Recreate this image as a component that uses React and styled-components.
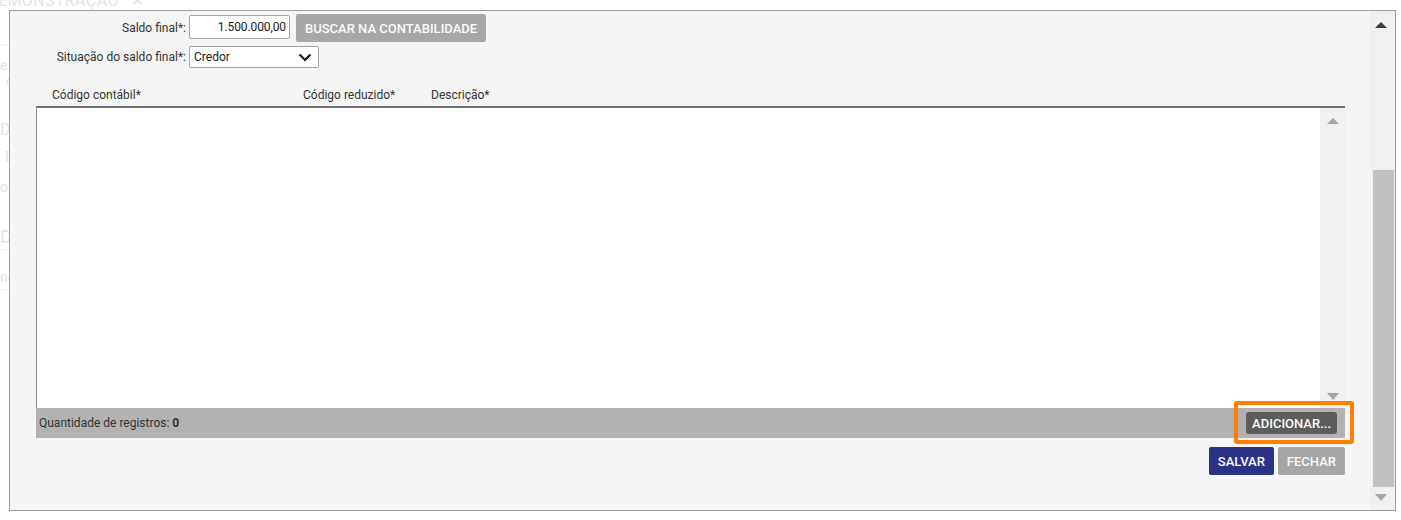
import React from 'react';
import styled, { createGlobalStyle } from 'styled-components';

const GlobalStyle = createGlobalStyle`
  html, body {
    margin: 0;
    padding: 0;
    background: #ffffff;
    font-family: Roboto, 'Liberation Sans', Arial, sans-serif;
    font-size: 12px;
    color: #333333;
  }
`;

const Page = styled.div`
  position: relative;
  width: 1401px;
  height: 520px;
  overflow: hidden;
`;

const Backdrop = styled.div`
  display: flex;
  flex-direction: column;
  color: #e4e4e4;
  width: 40px;
`;

const GhostTitle = styled.div`
  display: flex;
  align-items: center;
  gap: 12px;
  margin: -10px 0 0 -13px;
  height: 20px;
  font-size: 16px;
  letter-spacing: 0.4px;
  padding-bottom: 34px;
  border-bottom: 1px solid #f0f0f0;
  width: 40px;
  white-space: nowrap;
`;

const GhostLine = styled.div`
  margin-top: ${(p) => p.$top}px;
  padding-left: ${(p) => p.$left || 0}px;
  height: 16px;
  line-height: 16px;
  font-size: ${(p) => p.$size || 14}px;
  white-space: nowrap;
  ${(p) => p.$rule && 'padding-bottom: 4px; border-bottom: 1px solid #f0f0f0;'}
`;

const Dialog = styled.div`
  position: absolute;
  left: 9px;
  top: 10px;
  width: 1387px;
  height: 501px;
  box-sizing: border-box;
  border: 1px solid #9d9d9d;
  background: #f5f5f5;
  display: flex;
`;

const DialogBody = styled.div`
  flex: 1;
  padding: 3px 25px 0 26px;
  display: flex;
  flex-direction: column;
`;

const FormRow = styled.div`
  display: flex;
  align-items: center;
  height: ${(p) => p.$h}px;
  margin-bottom: 4px;
`;

const Label = styled.label`
  width: 150px;
  text-align: right;
  padding-right: 3px;
  color: #333;
`;

const TextInput = styled.div`
  box-sizing: border-box;
  width: 101px;
  height: 24px;
  margin-top: -3px;
  border: 1px solid #a3a3a3;
  border-radius: 2px;
  background: #fff;
  text-align: right;
  line-height: 22px;
  padding-right: 3px;
  letter-spacing: -0.1px;
  white-space: nowrap;
  color: #222;
`;

const Button = styled.button`
  box-sizing: border-box;
  height: ${(p) => p.$h || 28}px;
  padding: 0 ${(p) => p.$px || 10}px;
  border: none;
  border-radius: ${(p) => p.$radius || 2}px;
  background: ${(p) => p.$bg};
  color: #fbfbfb;
  font-family: Roboto, 'Liberation Sans', Arial, sans-serif;
  font-size: 13px;
  font-weight: 500;
  cursor: pointer;
  white-space: nowrap;
  margin-left: ${(p) => p.$ml || 0}px;
`;

const Select = styled.div`
  box-sizing: border-box;
  width: 130px;
  height: 22px;
  border: 1px solid #a3a3a3;
  border-radius: 2px;
  background: #fff;
  display: flex;
  align-items: center;
  justify-content: space-between;
  padding: 0 6px 0 4px;
  color: #222;
`;

const HeaderRow = styled.div`
  display: grid;
  grid-template-columns: 251px 128px 1fr;
  padding-left: 16px;
  margin-top: 15px;
  height: 19px;
  line-height: 16px;
  color: #333;
`;

const Table = styled.div`
  border-top: 2px solid #6f6f6f;
  border-left: 1px solid #8d8d8d;
  height: 300px;
  display: flex;
  background: #fff;
`;

const TableBody = styled.div`
  flex: 1;
`;

const ScrollTrack = styled.div`
  width: ${(p) => p.$w}px;
  background: #f0f0f0;
  display: flex;
  flex-direction: column;
  align-items: center;
  padding: ${(p) => p.$pad};
  box-sizing: border-box;
`;

const Arrow = styled.div`
  width: 0;
  height: 0;
  border-left: 6px solid transparent;
  border-right: 6px solid transparent;
  ${(p) =>
    p.$dir === 'up'
      ? `border-bottom: 6px solid ${p.$color};`
      : `border-top: 7px solid ${p.$color};`}
  margin-top: ${(p) => p.$mt || 0}px;
  margin-left: ${(p) => p.$ml || 0}px;
`;

const Spacer = styled.div`
  flex: 1;
`;

const Thumb = styled.div`
  width: 21px;
  height: 317px;
  background: #c1c1c1;
  margin: 0 0 0 2px;
`;

const FooterBar = styled.div`
  height: 30px;
  background: #b2b2b2;
  display: flex;
  align-items: center;
  justify-content: space-between;
  padding: 0 8px 0 3px;
  color: #333;
`;

const Highlight = styled.span`
  position: relative;
  display: inline-flex;
  &::after {
    content: '';
    position: absolute;
    left: -12px;
    top: -11px;
    right: -17px;
    bottom: -10px;
    border: 4px solid #ff8000;
    border-radius: 3px;
    pointer-events: none;
  }
`;

const Actions = styled.div`
  display: flex;
  justify-content: flex-end;
  gap: 4px;
  margin-top: 9px;
`;

export default function App() {
  return (
    <Page>
      <GlobalStyle />
      <Backdrop>
        <GhostTitle>
          <span>DEMONSTRAÇÃO</span>
          <span>✕</span>
        </GhostTitle>
        <GhostLine $top={12}>e s</GhostLine>
        <GhostLine $top={0} $left={6}>c</GhostLine>
        <GhostLine $top={33} $size={16}>De</GhostLine>
        <GhostLine $top={11} $left={5}>E</GhostLine>
        <GhostLine $top={14}>on</GhostLine>
        <GhostLine $top={34} $size={18} $rule>DE</GhostLine>
        <GhostLine $top={19} $rule>no</GhostLine>
      </Backdrop>

      <Dialog>
        <DialogBody>
          <FormRow $h={28}>
            <Label>Saldo final*:</Label>
            <TextInput>1.500.000,00</TextInput>
            <Button $bg="#a7a7a7" $ml={6} $px={9}>BUSCAR NA CONTABILIDADE</Button>
          </FormRow>
          <FormRow $h={22}>
            <Label>Situação do saldo final*:</Label>
            <Select>
              <span>Credor</span>
              <svg width="14" height="9" viewBox="0 0 14 9">
                <polyline points="1.5,1.5 7,7 12.5,1.5" fill="none" stroke="#111" strokeWidth="2.2" />
              </svg>
            </Select>
          </FormRow>

          <HeaderRow>
            <span>Código contábil*</span>
            <span>Código reduzido*</span>
            <span>Descrição*</span>
          </HeaderRow>

          <Table>
            <TableBody />
            <ScrollTrack $w={25} $pad="10px 0 8px 0">
              <Arrow $dir="up" $color="#a6a6a6" />
              <Spacer />
              <Arrow $dir="down" $color="#a6a6a6" />
            </ScrollTrack>
          </Table>

          <FooterBar>
            <span>
              Quantidade de registros: <b>0</b>
            </span>
            <Highlight>
              <Button $bg="#5c5c5c" $h={22} $px={6} $radius={3}>ADICIONAR...</Button>
            </Highlight>
          </FooterBar>

          <Actions>
            <Button $bg="#2b3283" $px={9}>SALVAR</Button>
            <Button $bg="#a6a6a6" $px={9}>FECHAR</Button>
          </Actions>
        </DialogBody>

        <ScrollTrack $w={25} $pad="11px 0 9px 0">
          <Arrow $dir="up" $color="#3c3c3c" $ml={-3} />
          <Spacer />
          <Thumb />
          <Arrow $dir="down" $color="#a6a6a6" $mt={7} $ml={-3} />
        </ScrollTrack>
      </Dialog>
    </Page>
  );
}
